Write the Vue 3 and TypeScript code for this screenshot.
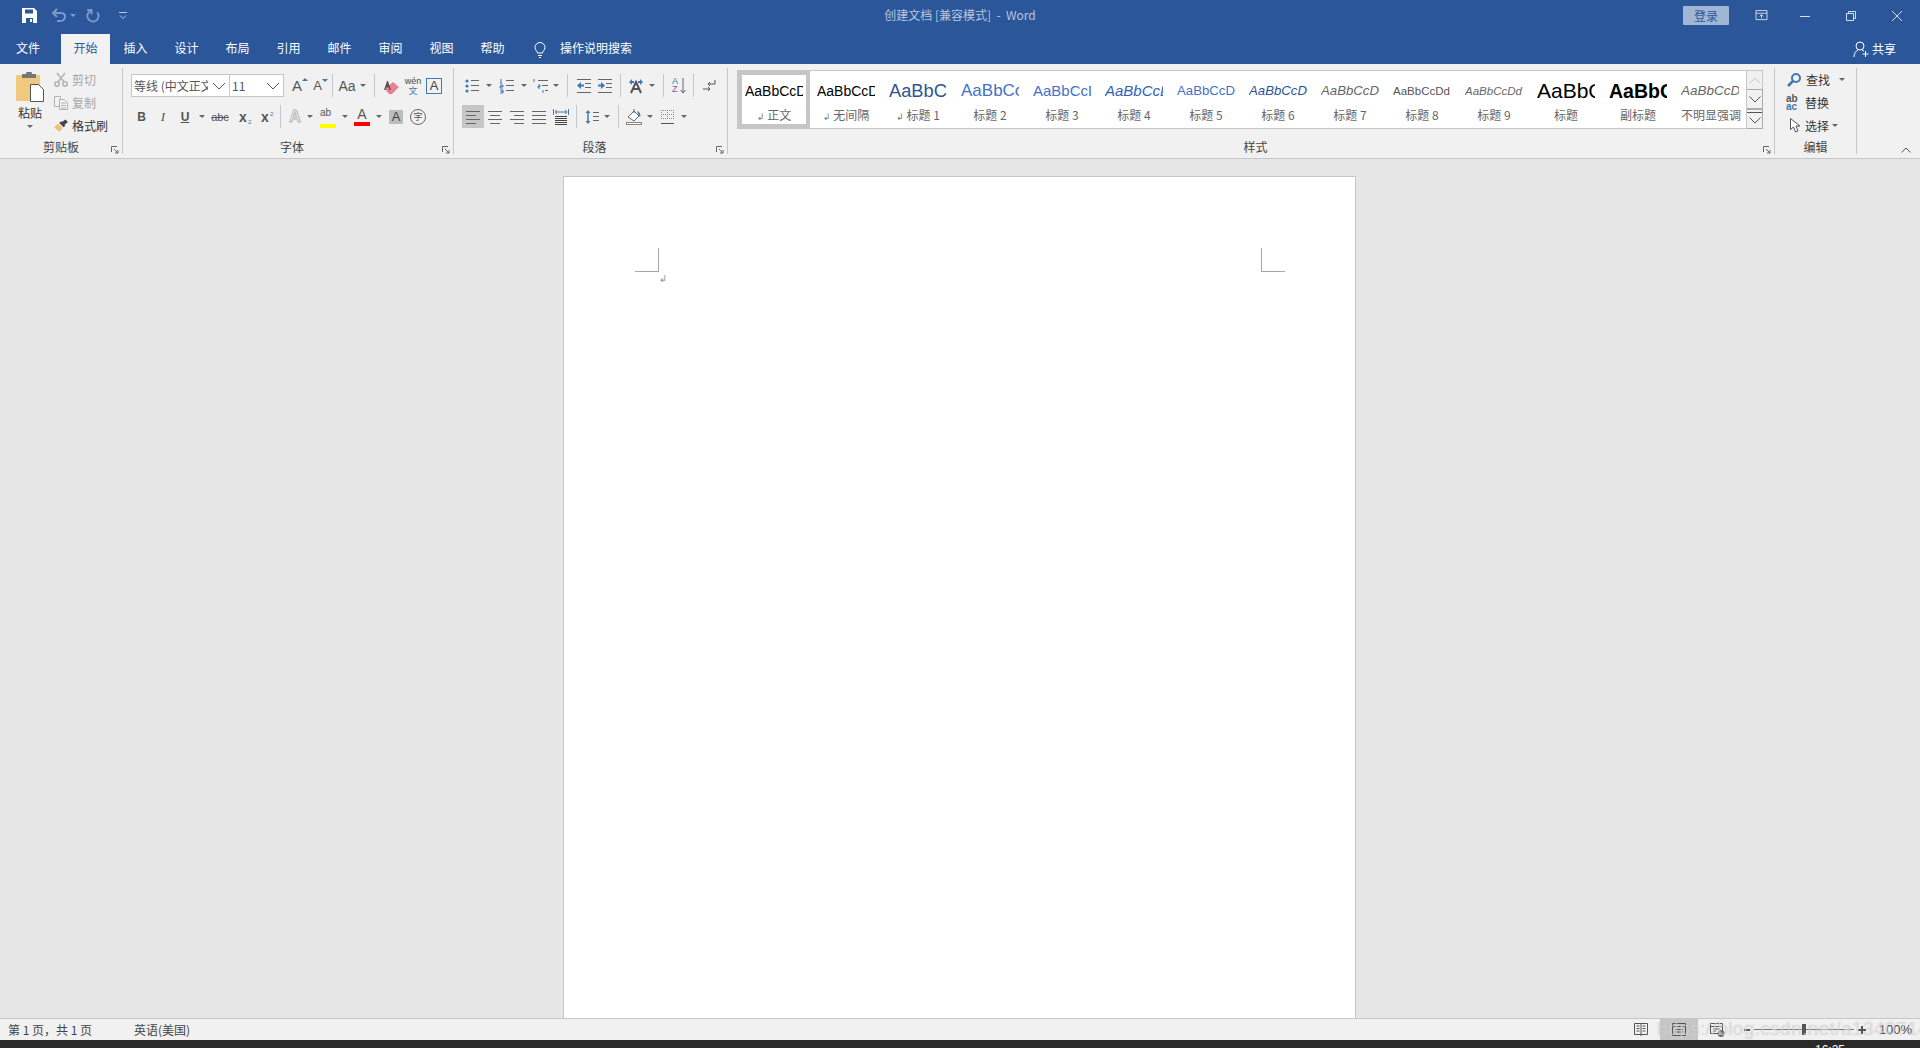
<script setup lang="ts">
interface Tool {
  w: number
  icon?: string
  vw?: number
  text?: string
  cls?: string
  caret?: boolean
  sep?: boolean
  active?: boolean
}

interface StyleItem {
  sample: string
  cls: string
  name: string
  mark?: boolean
}

const g = '#666'
const b = '#3f78b5'

const lines = (rows: [number, number, number][], color = g) =>
  rows.map(([y, x1, x2]) => `<path d="M${x1} ${y}.5H${x2}" stroke="${color}"/>`).join('')

const icons: Record<string, string> = {
  bullets:
    `<circle cx="3" cy="3" r="1.6" fill="${b}"/><circle cx="3" cy="8" r="1.6" fill="${b}"/><circle cx="3" cy="13" r="1.6" fill="${b}"/>` +
    lines([[2, 7, 15], [7, 7, 15], [12, 7, 15]]),
  numbers:
    `<path d="M2 1v4M1 5h2M1 7h3v1.5H1V10h3M1 12h3v3H1M2 13.500h2" stroke="${b}" fill="none"/>` +
    lines([[2, 7, 15], [7, 7, 15], [12, 7, 15]]),
  multilevel:
    `<path d="M1 1v3M5 7h2v1.500H5V10h2M10 12v3" stroke="${b}" fill="none"/>` +
    lines([[2, 5, 15], [7, 9, 15], [12, 12, 15]]),
  indentDec:
    lines([[1, 1, 15], [5, 9, 15], [9, 9, 15], [14, 1, 15]]) +
    `<path d="M1 7.500l4-3.500v2.500h3v2H5V11z" fill="${b}"/>`,
  indentInc:
    lines([[1, 1, 15], [5, 9, 15], [9, 9, 15], [14, 1, 15]]) +
    `<path d="M8 7.500l-4-3.500v2.500H1v2h3V11z" fill="${b}"/>`,
  direction:
    `<path d="M1 4l3-3v2h2v2H4v2zM15 4l-3-3v2h-2v2h2v2z" fill="${b}"/>` +
    `<path d="M3 15L8 4l5 11M5 11h6" stroke="#555" stroke-width="2" fill="none"/>`,
  marks:
    `<path d="M14 2v4H7M9 4L7 6l2 2" stroke="#555" fill="none"/><path d="M2 11h7M7 9l2 2-2 2" stroke="#555" fill="none"/>`,
  left: lines([[2, 1, 15], [6, 1, 11], [10, 1, 15], [14, 1, 11]]),
  center: lines([[2, 1, 15], [6, 3, 13], [10, 1, 15], [14, 3, 13]]),
  right: lines([[2, 1, 15], [6, 5, 15], [10, 1, 15], [14, 5, 15]]),
  justify: lines([[2, 1, 15], [6, 1, 15], [10, 1, 15], [14, 1, 15]]),
  distribute:
    `<path d="M.500 0v6M15.500 0v6M2 3h12M4 1L2 3l2 2M12 1l2 2-2 2" stroke="${b}" fill="none"/>` +
    lines([[7, 2, 14], [9, 2, 14], [11, 2, 14], [13, 2, 14], [15, 2, 14]], '#444'),
  spacing:
    `<path d="M4 1L1.500 4h5zM4 15l-2.500-3h5z" fill="${b}"/><path d="M4 3v10" stroke="${b}" stroke-width="1.500"/>` +
    lines([[3, 9, 15], [7, 9, 15], [11, 9, 15]]),
  shading:
    `<path d="M2 8l6-6 5 5-5 5z" fill="#fff" stroke="#666"/><path d="M8 0v4" stroke="#666"/>` +
    `<path d="M11 2c3 1 4 4 3 6-1-1-2-3-3-6z" fill="${b}"/><rect x=".500" y="13.500" width="15" height="2" fill="#fff" stroke="#888"/>`,
  borders:
    `<path d="M1 1.500h13M1 5.500h13M1 9.500h13M1.500 1v9M7.500 1v9M13.500 1v9" stroke="#888" stroke-dasharray="1 1"/><path d="M1 14.500h13" stroke="#555"/>`,
  eraser:
    `<path d="M2 11l8-7 6 5-7 7H6z" fill="#e8808d"/><path d="M4 3l-3 9h1.500l.8-2.500h2.500L6.500 12H8L5 3z" fill="#555"/>`
}

const fontRowTop: Tool[] = [
  { w: 20, text: 'A', cls: 'grow' },
  { w: 21, text: 'A', cls: 'shrink' },
  { w: 8, sep: true },
  { w: 22, text: 'Aa', cls: 'aa' },
  { w: 10, caret: true },
  { w: 12, sep: true },
  { w: 22, icon: icons.eraser, vw: 16 },
  { w: 22, text: 'wén', cls: 'wen' },
  { w: 20, text: 'A', cls: 'boxed' }
]

const fontRowBottom: Tool[] = [
  { w: 21, text: 'B', cls: 'bold' },
  { w: 22, text: 'I', cls: 'ital' },
  { w: 22, text: 'U', cls: 'under' },
  { w: 12, caret: true },
  { w: 24, text: 'abc', cls: 'strike' },
  { w: 22, text: 'x', cls: 'sub' },
  { w: 22, text: 'x', cls: 'sup' },
  { w: 8, sep: true },
  { w: 22, text: 'A', cls: 'outline' },
  { w: 8, caret: true },
  { w: 28, text: 'ab', cls: 'marker' },
  { w: 6, caret: true },
  { w: 28, text: 'A', cls: 'redline' },
  { w: 6, caret: true },
  { w: 28, text: 'A', cls: 'shaded' },
  { w: 16, text: '字', cls: 'ringed' }
]

const paraRowTop: Tool[] = [
  { w: 20, icon: icons.bullets },
  { w: 14, caret: true },
  { w: 22, icon: icons.numbers },
  { w: 12, caret: true },
  { w: 22, icon: icons.multilevel },
  { w: 8, caret: true },
  { w: 14, sep: true },
  { w: 20, icon: icons.indentDec },
  { w: 22, icon: icons.indentInc },
  { w: 8, sep: true },
  { w: 24, icon: icons.direction },
  { w: 8, caret: true },
  { w: 14, sep: true },
  { w: 18, text: 'AZ', cls: 'sort' },
  { w: 10, sep: true },
  { w: 22, icon: icons.marks }
]

const paraRowBottom: Tool[] = [
  { w: 22, icon: icons.left, active: true },
  { w: 22, icon: icons.center },
  { w: 22, icon: icons.right },
  { w: 22, icon: icons.justify },
  { w: 22, icon: icons.distribute },
  { w: 8, sep: true },
  { w: 24, icon: icons.spacing },
  { w: 6, caret: true },
  { w: 16, sep: true },
  { w: 16, icon: icons.shading },
  { w: 16, caret: true },
  { w: 20, icon: icons.borders },
  { w: 12, caret: true }
]

const tabs = ['插入', '设计', '布局', '引用', '邮件', '审阅', '视图', '帮助']

const galleryStyles: StyleItem[] = [
  { sample: 'AaBbCcD', cls: 's-normal', name: '正文', mark: true },
  { sample: 'AaBbCcD', cls: 's-normal', name: '无间隔', mark: true },
  { sample: 'AaBbC', cls: 's-h1', name: '标题 1', mark: true },
  { sample: 'AaBbCc', cls: 's-h2', name: '标题 2' },
  { sample: 'AaBbCcD', cls: 's-h3', name: '标题 3' },
  { sample: 'AaBbCcD', cls: 's-h4', name: '标题 4' },
  { sample: 'AaBbCcD', cls: 's-h5', name: '标题 5' },
  { sample: 'AaBbCcD', cls: 's-h6', name: '标题 6' },
  { sample: 'AaBbCcD', cls: 's-h7', name: '标题 7' },
  { sample: 'AaBbCcDd', cls: 's-h8', name: '标题 8' },
  { sample: 'AaBbCcDd', cls: 's-h9', name: '标题 9' },
  { sample: 'AaBbC', cls: 's-title', name: '标题' },
  { sample: 'AaBbC', cls: 's-sub', name: '副标题' },
  { sample: 'AaBbCcD', cls: 's-subtle', name: '不明显强调' }
]
</script>

<template>
  <div class="word">
    <header class="titlebar">
      <div class="qat">
        <svg class="qat-save" viewBox="0 0 15 15">
          <path d="M0 0h12l3 3v12H0z" fill="#fff" />
          <path d="M3 1.500h8v4H3zM4 10h7v5H4z" fill="#2b579a" />
          <path d="M8 11h2v3H8z" fill="#fff" />
        </svg>
        <svg class="qat-undo" viewBox="0 0 15 15" fill="none" stroke="#7f9ac6" stroke-width="2">
          <path d="M2 5h8c6 0 5 8-1 8H6" />
          <path d="M6 1L2 5l4 4" />
        </svg>
        <span class="qat-caret"></span>
        <svg class="qat-redo" viewBox="0 0 15 15" fill="none" stroke="#7f9ac6" stroke-width="2">
          <path d="M12 3.500a6 6 0 1 1-7-1.500" />
          <path d="M1 1h5v5" />
        </svg>
        <svg class="qat-more" viewBox="0 0 8 8" fill="none" stroke="#b9c8e0">
          <path d="M0 .500h8M1 3.500l3 3 3-3" />
        </svg>
      </div>
      <div class="doc-title">创建文档 [兼容模式]&nbsp;&nbsp;-&nbsp;&nbsp;Word</div>
      <div class="win-actions">
        <span class="signin">登录</span>
        <svg class="win-ribbon" viewBox="0 0 13 12" fill="none" stroke="#d5deec">
          <path d="M.500.500h12v10H.500zM.500 3.500h12M6.500 9V5M4.500 7l2-2 2 2" />
        </svg>
        <svg class="win-btn win-min" viewBox="0 0 10 10" stroke="#d5deec"><path d="M0 5.500h10" /></svg>
        <svg class="win-btn win-max" viewBox="0 0 10 10" fill="none" stroke="#d5deec">
          <path d="M.500 2.500h7v7h-7zM2.500 2.500v-2h7v7h-2" />
        </svg>
        <svg class="win-btn win-close" viewBox="0 0 10 10" stroke="#d5deec"><path d="M0 0l10 10M10 0L0 10" /></svg>
      </div>
    </header>

    <nav class="tabbar">
      <span class="tab tab-file">文件</span>
      <span class="tab tab-active">开始</span>
      <span v-for="tab in tabs" :key="tab" class="tab">{{ tab }}</span>
      <svg class="bulb" viewBox="0 0 12 16" fill="none" stroke="#fff">
        <path d="M3.500 11C3 8.500 1 8 1 5.500a5 5 0 0 1 10 0C11 8 9 8.500 8.500 11zM4 13.500h4M5 15.500h2" />
      </svg>
      <span class="search">操作说明搜索</span>
      <span class="share">
        <svg viewBox="0 0 16 17" fill="none" stroke="#fff">
          <circle cx="7" cy="5" r="4" />
          <path d="M1 16c0-4 2-6 4-7M9 9l2 1M12.500 10v6M9.500 13h6" />
        </svg>
        共享
      </span>
    </nav>

    <section class="ribbon">
      <!-- 剪贴板 -->
      <div class="group group-clip">
        <div class="clip-body">
          <div class="paste">
            <svg class="paste-icon" viewBox="0 0 28 30">
              <rect y="3" width="24" height="26" rx="1" fill="#f0c97f" />
              <path d="M6 2h4a3 3 0 0 1 6 0h4v4H6z" fill="#777" />
              <path d="M14.500 12.500h8l5 5v12h-13z" fill="#fff" stroke="#555" />
            </svg>
            <span class="paste-label">粘贴</span>
            <span class="caret"></span>
          </div>
          <div class="clip-list">
            <div class="clip-row muted">
              <svg viewBox="0 0 14 15" fill="none" stroke="#b3b3b3" stroke-width="1.500">
                <path d="M3 1l7 9M11 1L4 10" />
                <circle cx="3" cy="12" r="2.200" />
                <circle cx="11" cy="12" r="2.200" />
              </svg>
              <span>剪切</span>
            </div>
            <div class="clip-row muted">
              <svg viewBox="0 0 14 15" fill="#f2f2f2" stroke="#b3b3b3">
                <path d="M.500 1.500h6v10h-6z" />
                <path d="M5.500 4.500h5l3 3v7h-8zM7 8h5M7 10.500h5M7 13h5" />
              </svg>
              <span>复制</span>
            </div>
            <div class="clip-row">
              <svg viewBox="0 0 16 14">
                <path d="M0 9l5-4 5 5-4 4z" fill="#ecc078" />
                <path d="M6 4l5 5 2-2-5-5zM9 3l4-3 3 3-4 3z" fill="#444" />
              </svg>
              <span>格式刷</span>
            </div>
          </div>
        </div>
        <div class="group-label">剪贴板</div>
        <svg class="launcher" viewBox="0 0 8 8" fill="none" stroke="#666"><path d="M.500 6V.500H6M3 3l4 4M7 4v3H4" /></svg>
      </div>

      <!-- 字体 -->
      <div class="group group-font">
        <div class="rows">
          <div class="row">
            <div class="combo combo-name">
              <span class="combo-text">等线 (中文正文)</span>
              <svg viewBox="0 0 14 8" fill="none" stroke="#555"><path d="M1 1l6 6 6-6" /></svg>
            </div>
            <div class="combo combo-size">
              <span class="combo-text">11</span>
              <svg viewBox="0 0 14 8" fill="none" stroke="#555"><path d="M1 1l6 6 6-6" /></svg>
            </div>
            <template v-for="(t, i) in fontRowTop" :key="i">
              <span v-if="t.sep" class="sep" :style="{ width: t.w + 'px' }"></span>
              <span v-else-if="t.caret" class="caret-cell" :style="{ width: t.w + 'px' }"><i class="caret"></i></span>
              <span v-else class="tool" :style="{ width: t.w + 'px' }">
                <svg v-if="t.icon" viewBox="0 0 16 16" v-html="t.icon"></svg>
                <span v-else :class="t.cls">{{ t.text }}</span>
              </span>
            </template>
          </div>
          <div class="row">
            <template v-for="(t, i) in fontRowBottom" :key="i">
              <span v-if="t.sep" class="sep" :style="{ width: t.w + 'px' }"></span>
              <span v-else-if="t.caret" class="caret-cell" :style="{ width: t.w + 'px' }"><i class="caret"></i></span>
              <span v-else class="tool" :style="{ width: t.w + 'px' }">
                <span :class="t.cls">{{ t.text }}</span>
              </span>
            </template>
          </div>
        </div>
        <div class="group-label">字体</div>
        <svg class="launcher" viewBox="0 0 8 8" fill="none" stroke="#666"><path d="M.500 6V.500H6M3 3l4 4M7 4v3H4" /></svg>
      </div>

      <!-- 段落 -->
      <div class="group group-para">
        <div class="rows">
          <div class="row">
            <template v-for="(t, i) in paraRowTop" :key="i">
              <span v-if="t.sep" class="sep" :style="{ width: t.w + 'px' }"></span>
              <span v-else-if="t.caret" class="caret-cell" :style="{ width: t.w + 'px' }"><i class="caret"></i></span>
              <span v-else class="tool" :style="{ width: t.w + 'px' }">
                <svg v-if="t.icon" viewBox="0 0 16 16" v-html="t.icon"></svg>
                <span v-else class="sort">
                  <b class="az-a">A</b><b class="az-z">Z</b>
                  <svg class="az-arrow" viewBox="0 0 6 16" fill="none" stroke="#666"><path d="M3 0v15M.500 12L3 15l2.500-3" /></svg>
                </span>
              </span>
            </template>
          </div>
          <div class="row">
            <template v-for="(t, i) in paraRowBottom" :key="i">
              <span v-if="t.sep" class="sep" :style="{ width: t.w + 'px' }"></span>
              <span v-else-if="t.caret" class="caret-cell" :style="{ width: t.w + 'px' }"><i class="caret"></i></span>
              <span v-else class="tool" :class="{ 'tool-on': t.active }" :style="{ width: t.w + 'px' }">
                <svg viewBox="0 0 16 16" v-html="t.icon"></svg>
              </span>
            </template>
          </div>
        </div>
        <div class="group-label">段落</div>
        <svg class="launcher" viewBox="0 0 8 8" fill="none" stroke="#666"><path d="M.500 6V.500H6M3 3l4 4M7 4v3H4" /></svg>
      </div>

      <!-- 样式 -->
      <div class="group group-styles">
        <div class="gallery-wrap">
          <div class="gallery">
            <div
              v-for="(s, i) in galleryStyles"
              :key="i"
              class="style-item"
              :class="{ selected: i === 0 }"
            >
              <div class="style-sample" :class="s.cls">{{ s.sample }}</div>
              <div class="style-name"><span v-if="s.mark" class="style-mark">↲</span>{{ s.name }}</div>
            </div>
          </div>
          <div class="scroller">
            <span class="scroll-btn scroll-up">
              <svg viewBox="0 0 12 7" fill="none" stroke="#c6c6c6"><path d="M.500 6.500L6 1l5.500 5.500" /></svg>
            </span>
            <span class="scroll-btn">
              <svg viewBox="0 0 12 7" fill="none" stroke="#555"><path d="M.500.500L6 6l5.500-5.500" /></svg>
            </span>
            <span class="scroll-btn scroll-more">
              <svg viewBox="0 0 12 7" fill="none" stroke="#555"><path d="M.500.500L6 6l5.500-5.500" /></svg>
            </span>
          </div>
        </div>
        <div class="group-label">样式</div>
        <svg class="launcher" viewBox="0 0 8 8" fill="none" stroke="#666"><path d="M.500 6V.500H6M3 3l4 4M7 4v3H4" /></svg>
      </div>

      <!-- 编辑 -->
      <div class="group group-edit">
        <div class="edit-list">
          <div class="edit-row">
            <svg class="edit-find" viewBox="0 0 14 14" fill="none" stroke="#3f78b5" stroke-width="2">
              <circle cx="9" cy="5" r="4" />
              <path d="M6 8l-5 5" stroke-width="2.500" />
            </svg>
            <span>查找</span>
            <i class="caret edit-caret-find"></i>
          </div>
          <div class="edit-row">
            <span class="abc-icon"><b class="abc-ab">ab</b><b class="abc-ac">ac</b></span>
            <span>替换</span>
          </div>
          <div class="edit-row">
            <svg class="edit-select" viewBox="0 0 10 15" fill="#fff" stroke="#555">
              <path d="M.500.500v11l3-2.500 2 5 2.500-1-2-5h4z" />
            </svg>
            <span>选择</span>
            <i class="caret edit-caret-select"></i>
          </div>
        </div>
        <div class="group-label">编辑</div>
      </div>

      <div class="collapse">
        <svg viewBox="0 0 10 6" fill="none" stroke="#555"><path d="M.500 5.500L5 1l4.500 4.500" /></svg>
      </div>
    </section>

    <main class="canvas">
      <div class="page">
        <div class="margins">
          <span class="corner corner-left"></span>
          <span class="corner corner-right"></span>
        </div>
        <div class="para-mark">↲</div>
      </div>
    </main>

    <footer class="statusbar">
      <span class="status-pages">第 1 页，共 1 页</span>
      <span class="status-lang">英语(美国)</span>
      <div class="status-right">
        <svg class="view-read" viewBox="0 0 14 15" fill="none" stroke="#555">
          <path d="M.500 1.500h13v11h-13zM7 1v13M2.500 4h3M2.500 6.500h3M2.500 9h3M8.500 4h3M8.500 6.500h3M8.500 9h3" />
        </svg>
        <span class="view-print">
          <svg viewBox="0 0 14 13" fill="none" stroke="#555">
            <path d="M.500.500h13v12H.500zM.500 3.500h13M3 6.500h8M3 9h8" />
          </svg>
        </span>
        <svg class="view-web" viewBox="0 0 15 14" fill="none" stroke="#555">
          <path d="M.500.500h12v10H.500zM.500 3.500h12M3 6h7M3 8h3" />
          <circle cx="11" cy="10.500" r="3" fill="#888" />
        </svg>
        <span class="zoom-minus"></span>
        <span class="zoom-track"><span class="zoom-thumb"></span></span>
        <span class="zoom-plus"></span>
        <span class="zoom-value">100%</span>
      </div>
      <span class="watermark">https://blog.csdn.net/a1340714201</span>
    </footer>

    <div class="taskbar"><span class="clock">16:25</span></div>
  </div>
</template>

<style>
html,
body {
  margin: 0;
  height: 100%;
  overflow: hidden;
}
</style>

<style scoped>
.word {
  width: 1920px;
  height: 1048px;
  display: flex;
  flex-direction: column;
  overflow: hidden;
  background: #e6e6e6;
  font-family: "Noto Sans CJK SC", "Liberation Sans", sans-serif;
  font-size: 12px;
  color: #444;
}

svg {
  display: block;
}

/* Title bar */
.titlebar {
  height: 30px;
  padding-top: 0;
  display: grid;
  grid-template-columns: 1fr auto 1fr;
  align-items: center;
  background: #2b579a;
  flex-shrink: 0;
}

.qat {
  display: flex;
  align-items: center;
  padding-left: 22px;
}

.qat-save {
  width: 15px;
  height: 15px;
}

.qat-undo {
  width: 15px;
  height: 15px;
  margin-left: 14px;
}

.qat-caret {
  width: 0;
  height: 0;
  margin-left: 4px;
  border: 3px solid transparent;
  border-top: 3px solid #7f9ac6;
  border-bottom: 0;
}

.qat-redo {
  width: 14px;
  height: 14px;
  margin-left: 10px;
}

.qat-more {
  width: 8px;
  height: 8px;
  margin-left: 19px;
}

.doc-title {
  color: #b6c6df;
  font-size: 12px;
  line-height: 30px;
  padding-bottom: 1px;
}

.win-actions {
  display: flex;
  align-items: center;
  justify-content: flex-end;
}

.signin {
  width: 46px;
  height: 19px;
  margin-right: 26px;
  border-radius: 1px;
  background: #a1b6d5;
  color: #2b579a;
  text-align: center;
  line-height: 19px;
  font-size: 12px;
}

.win-ribbon {
  width: 13px;
  height: 11px;
  margin-right: 32px;
}

.win-btn {
  width: 10px;
  height: 10px;
}

.win-min {
  margin-right: 36px;
}

.win-max {
  margin-right: 36px;
}

.win-close {
  margin-right: 18px;
}

/* Tabs */
.tabbar {
  height: 34px;
  display: flex;
  align-items: flex-end;
  background: #2b579a;
  flex-shrink: 0;
  color: #fff;
}

.tab {
  width: 51px;
  height: 30px;
  line-height: 28px;
  text-align: center;
  flex-shrink: 0;
}

.tab-file {
  width: 61px;
  padding-right: 5px;
  box-sizing: border-box;
}

.tab-active {
  width: 49px;
  background: #f1f1f1;
  color: #2b579a;
}

.bulb {
  width: 12px;
  height: 16px;
  margin: 0 14px 6px 16px;
  flex-shrink: 0;
}

.search {
  height: 30px;
  line-height: 28px;
}

.share {
  margin-left: auto;
  margin-right: 24px;
  height: 30px;
  line-height: 28px;
  display: flex;
  align-items: center;
  gap: 3px;
}

.share svg {
  width: 16px;
  height: 17px;
}

/* Ribbon */
.ribbon {
  height: 94px;
  padding: 4px 0;
  box-sizing: border-box;
  display: flex;
  background: #f1f1f1;
  border-bottom: 1px solid #c6c6c6;
  box-sizing: content-box;
  height: 86px;
  flex-shrink: 0;
}

.group {
  position: relative;
  display: flex;
  flex-direction: column;
  justify-content: space-between;
  box-sizing: border-box;
  border-right: 1px solid #c6c6c6;
  height: 86px;
}

.group-clip {
  width: 123px;
}

.group-font {
  width: 331px;
  padding-left: 8px;
}

.group-para {
  width: 274px;
  padding-left: 8px;
}

.group-styles {
  width: 1047px;
  padding-left: 9px;
}

.group-edit {
  width: 82px;
}

.group-label {
  height: 15px;
  line-height: 15px;
  text-align: center;
  color: #444;
  font-size: 12px;
}

.launcher {
  position: absolute;
  right: 3px;
  bottom: 0;
  width: 8px;
  height: 8px;
}

/* Clipboard */
.clip-body {
  display: flex;
}

.paste {
  width: 54px;
  padding-left: 6px;
  box-sizing: border-box;
  display: flex;
  flex-direction: column;
  align-items: center;
  padding-top: 4px;
}

.paste-icon {
  width: 28px;
  height: 30px;
}

.paste-label {
  height: 20px;
  line-height: 20px;
  margin-top: 1px;
  color: #333;
}

.paste .caret {
  margin-top: 2px;
}

.clip-list {
  display: flex;
  flex-direction: column;
}

.clip-row {
  height: 23px;
  display: flex;
  align-items: center;
  gap: 4px;
  color: #333;
}

.clip-row.muted {
  color: #a6a6a6;
}

.clip-row svg {
  width: 14px;
  height: 15px;
}

/* Shared tool rows */
.rows {
  display: flex;
  flex-direction: column;
  gap: 8px;
  padding-top: 6px;
}

.row {
  height: 23px;
  display: flex;
  align-items: stretch;
}

.tool {
  display: flex;
  align-items: center;
  justify-content: center;
  flex-shrink: 0;
  color: #555;
  font-family: "Liberation Sans", sans-serif;
}

.tool svg {
  width: 16px;
  height: 16px;
}

.tool-on {
  background: #c6c6c6;
}

.sep {
  position: relative;
  flex-shrink: 0;
  display: flex;
  justify-content: center;
}

.sep::before {
  content: '';
  width: 1px;
  height: 100%;
  background: #c6c6c6;
}

.caret-cell {
  display: flex;
  align-items: center;
  justify-content: center;
  flex-shrink: 0;
}

.caret {
  display: block;
  width: 0;
  height: 0;
  border-left: 3px solid transparent;
  border-right: 3px solid transparent;
  border-top: 3px solid #666;
}

/* Font group */
.combo {
  box-sizing: border-box;
  height: 23px;
  display: flex;
  align-items: center;
  background: #fff;
  border: 1px solid #c6c6c6;
  flex-shrink: 0;
}

.combo-name {
  width: 99px;
}

.combo-size {
  width: 55px;
  margin-left: -1px;
  margin-right: 3px;
}

.combo-text {
  flex: 1;
  min-width: 0;
  padding-left: 2px;
  white-space: nowrap;
  overflow: hidden;
  color: #555;
}

.combo svg {
  width: 14px;
  height: 8px;
  margin: 0 3px 0 4px;
  flex-shrink: 0;
}

.grow,
.shrink {
  position: relative;
  font-size: 15px;
}

.shrink {
  font-size: 13px;
}

.grow::after,
.shrink::after {
  content: '';
  position: absolute;
  right: -6px;
  top: 1px;
  border-left: 3px solid transparent;
  border-right: 3px solid transparent;
}

.grow::after {
  border-bottom: 3px solid #3f78b5;
}

.shrink::after {
  border-top: 3px solid #3f78b5;
}

.aa {
  font-size: 14px;
}

.wen {
  position: relative;
  font-size: 9px;
  line-height: 10px;
  height: 20px;
  color: #444;
}

.wen::after {
  content: '文';
  display: block;
  text-align: center;
  color: #3f78b5;
  font-family: "Noto Sans CJK SC", sans-serif;
}

.boxed {
  box-sizing: border-box;
  width: 16px;
  height: 16px;
  border: 1px solid #3f78b5;
  text-align: center;
  line-height: 14px;
  font-size: 13px;
  color: #444;
}

.bold {
  font-weight: 700;
  font-size: 12px;
}

.ital {
  font-style: italic;
  font-family: "Liberation Serif", serif;
  font-size: 13px;
}

.under {
  font-size: 12px;
  font-weight: 700;
  text-decoration: underline;
}

.strike {
  font-size: 11px;
  text-decoration: line-through;
}

.sub,
.sup {
  position: relative;
  font-size: 14px;
  font-weight: 700;
}

.sub::after,
.sup::after {
  position: absolute;
  left: 9px;
  font-size: 6px;
  color: #3f78b5;
  font-weight: 400;
}

.sub::after {
  content: '2';
  bottom: 0;
}

.sup::after {
  content: '2';
  top: 2px;
}

.outline {
  font-size: 16px;
  font-weight: 700;
  color: #f1f1f1;
  -webkit-text-stroke: 1px #b8b8b8;
}

.marker {
  width: 16px;
  height: 18px;
  border-bottom: 4px solid #ffff00;
  line-height: 14px;
  font-size: 10px;
  color: #555;
  box-sizing: content-box;
}

.redline {
  width: 16px;
  height: 15px;
  text-align: center;
  line-height: 15px;
  border-bottom: 4px solid #ff0000;
  font-size: 14px;
}

.shaded {
  width: 14px;
  height: 14px;
  text-align: center;
  line-height: 14px;
  background: #bdbdbd;
  font-size: 13px;
  color: #444;
}

.ringed {
  box-sizing: border-box;
  width: 16px;
  height: 16px;
  border: 1px solid #666;
  border-radius: 50%;
  text-align: center;
  line-height: 13px;
  font-size: 9px;
  font-family: "Noto Sans CJK SC", sans-serif;
}

/* Sort icon, letters stacked next to the arrow */
.sort {
  position: relative;
  display: block;
  width: 14px;
  height: 17px;
}

.az-a,
.az-z {
  position: absolute;
  left: 0;
  font-size: 9px;
  line-height: 9px;
  font-weight: 400;
}

.az-a {
  top: 0;
  color: #3f78b5;
}

.az-z {
  top: 8px;
  color: #8a4fb0;
}

.tool svg.az-arrow {
  position: absolute;
  right: 0;
  top: 1px;
  width: 6px;
  height: 16px;
}

/* Styles gallery */
.gallery-wrap {
  display: flex;
  margin-top: 2px;
}

.gallery {
  box-sizing: border-box;
  width: 1010px;
  height: 59px;
  display: flex;
  background: #fff;
  border: 1px solid #c6c6c6;
}

.style-item {
  box-sizing: border-box;
  width: 72px;
  height: 57px;
  flex-shrink: 0;
  padding: 0 7px;
  text-align: center;
  border: 4px solid transparent;
  border-left-width: 0;
  border-right-width: 0;
}

.style-item.selected {
  border: 4px solid #c6c6c6;
  padding: 0 3px;
}

.style-sample {
  height: 30px;
  line-height: 30px;
  margin-top: 1px;
  width: 58px;
  overflow: hidden;
  white-space: nowrap;
  text-align: left;
  font-family: "Liberation Sans", sans-serif;
  font-size: 14px;
  color: #000;
}

.s-h1 {
  font-size: 18.300px;
  color: #2f5496;
}

.s-h2 {
  font-size: 17px;
  color: #4472c4;
}

.s-h3 {
  font-size: 15px;
  color: #4472c4;
}

.s-h4 {
  font-size: 15px;
  font-style: italic;
  color: #2f5fb8;
}

.s-h5 {
  font-size: 13.200px;
  color: #4472c4;
}

.s-h6 {
  font-size: 13.200px;
  font-style: italic;
  color: #2f5496;
}

.s-h7 {
  font-size: 13.200px;
  font-style: italic;
  color: #666;
}

.s-h8 {
  font-size: 11.500px;
  color: #555;
}

.s-h9 {
  font-size: 11.500px;
  font-style: italic;
  color: #666;
}

.s-title {
  font-size: 21px;
}

.s-sub {
  font-size: 19.500px;
  font-weight: 700;
}

.s-subtle {
  font-size: 13.500px;
  font-style: italic;
  color: #666;
}

.style-name {
  height: 18px;
  line-height: 18px;
  color: #666;
  white-space: nowrap;
  text-align: center;
}

.style-mark {
  font-size: 9px;
  margin-right: 3px;
  color: #777;
  font-family: "DejaVu Sans", sans-serif;
}

.scroller {
  width: 16px;
  height: 59px;
  display: flex;
  flex-direction: column;
}

.scroll-btn {
  box-sizing: border-box;
  height: 20px;
  display: flex;
  align-items: center;
  justify-content: center;
  border: 1px solid #ababab;
  border-left: 0;
  margin-bottom: -1px;
}

.scroll-btn svg {
  width: 12px;
  height: 7px;
}

.scroll-up {
  border-color: #c6c6c6;
}

.scroll-more {
  position: relative;
  padding-top: 3px;
  margin-bottom: 0;
  margin-top: 1px;
}

.scroll-more::before {
  content: '';
  position: absolute;
  left: 0;
  right: 0;
  top: 2px;
  height: 1px;
  background: #555;
}

/* Editing */
.edit-list {
  display: flex;
  flex-direction: column;
  padding-left: 11px;
}

.edit-row {
  height: 23px;
  display: flex;
  align-items: center;
  color: #333;
  position: relative;
}

.edit-row > span:nth-of-type(1),
.edit-row > span:last-of-type {
  margin-left: 0;
}

.edit-find {
  width: 14px;
  height: 14px;
  margin: 0 5px 0 1px;
}

.edit-select {
  width: 10px;
  height: 15px;
  margin: 0 5px 0 4px;
}

.abc-icon {
  position: relative;
  width: 16px;
  height: 17px;
  margin-right: 3px;
  font-family: "Liberation Sans", sans-serif;
}

.abc-ab,
.abc-ac {
  position: absolute;
  left: 0;
  font-size: 10px;
  line-height: 9px;
}

.abc-ab {
  top: 0;
  color: #555;
}

.abc-ac {
  top: 8px;
  color: #3f78b5;
}

.edit-caret-find {
  margin-left: 9px;
}

.edit-caret-select {
  margin-left: 3px;
}

.collapse {
  flex: 1;
  display: flex;
  justify-content: flex-end;
  align-items: flex-end;
  padding: 0 9px 0 0;
}

.collapse svg {
  width: 10px;
  height: 6px;
  margin-bottom: 1px;
}

/* Document canvas */
.canvas {
  flex: 1;
  min-height: 0;
  display: flex;
  justify-content: center;
  padding-top: 17px;
  padding-right: 1px;
  overflow: hidden;
  background: #e6e6e6;
}

.page {
  box-sizing: border-box;
  width: 793px;
  height: 1122px;
  flex-shrink: 0;
  padding: 71px 70px 0 71px;
  background: #fff;
  border: 1px solid #c6c6c6;
}

.margins {
  display: flex;
  justify-content: space-between;
}

.corner {
  box-sizing: border-box;
  width: 24px;
  height: 24px;
  border-bottom: 1px solid #a6a6a6;
}

.corner-left {
  border-right: 1px solid #a6a6a6;
}

.corner-right {
  border-left: 1px solid #a6a6a6;
}

.para-mark {
  height: 12px;
  padding-left: 24px;
  margin-top: 1px;
  font-family: "DejaVu Sans", sans-serif;
  font-size: 10px;
  line-height: 12px;
  color: #999;
}

/* Status bar */
.statusbar {
  position: relative;
  box-sizing: border-box;
  height: 22px;
  flex-shrink: 0;
  display: flex;
  align-items: center;
  background: #f1f1f1;
  border-top: 1px solid #c6c6c6;
  color: #444;
}

.status-pages {
  width: 126px;
  padding-left: 8px;
  flex-shrink: 0;
  box-sizing: content-box;
}

.status-lang {
  flex-shrink: 0;
}

.status-right {
  margin-left: auto;
  height: 100%;
  display: flex;
  align-items: center;
  padding-right: 8px;
}

.view-read {
  width: 14px;
  height: 15px;
}

.view-print {
  width: 38px;
  height: 100%;
  margin-left: 12px;
  display: flex;
  align-items: center;
  justify-content: center;
  background: #c6c6c6;
}

.view-print svg {
  width: 14px;
  height: 13px;
}

.view-web {
  width: 15px;
  height: 14px;
  margin-left: 12px;
}

.zoom-minus {
  width: 6px;
  height: 2px;
  margin-left: 19px;
  background: #555;
}

.zoom-track {
  position: relative;
  width: 100px;
  height: 1px;
  margin-left: 4px;
  background: #777;
  display: flex;
  justify-content: center;
}

.zoom-thumb {
  width: 4px;
  height: 11px;
  margin-top: -5px;
  background: #555;
}

.zoom-plus {
  position: relative;
  width: 8px;
  height: 2px;
  margin-left: 4px;
  background: #555;
}

.zoom-plus::after {
  content: '';
  position: absolute;
  left: 3px;
  top: -3px;
  width: 2px;
  height: 8px;
  background: #555;
}

.zoom-value {
  margin-left: 13px;
  font-family: "Liberation Sans", sans-serif;
  font-size: 13px;
}

.watermark {
  position: absolute;
  left: 1657px;
  top: -3px;
  line-height: 26px;
  font-family: "Liberation Sans", sans-serif;
  font-size: 19px;
  letter-spacing: 0.4px;
  white-space: nowrap;
  color: rgba(255, 255, 255, 0.45);
  text-shadow: 0 0 1px rgba(140, 140, 140, 0.5);
}

/* Sliver of the desktop taskbar */
.taskbar {
  height: 8px;
  flex-shrink: 0;
  background: #2a2a2a;
  overflow: hidden;
  position: relative;
}

.clock {
  position: absolute;
  left: 1815px;
  top: 4px;
  line-height: 12px;
  color: #fff;
  font-family: "Liberation Sans", sans-serif;
  font-size: 12px;
}
</style>
